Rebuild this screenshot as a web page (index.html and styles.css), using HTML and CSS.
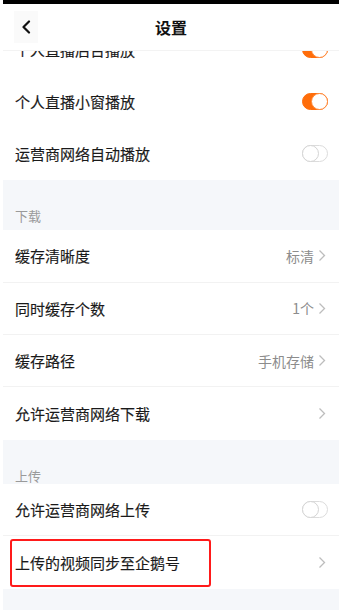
FILE: index.html
```html
<!DOCTYPE html>
<html lang="zh-CN">
<head>
<meta charset="utf-8">
<title>设置</title>
<link rel="stylesheet" href="styles.css">
</head>
<body>
<div class="phone">
  <div class="statusbar"></div>
  <div class="screen">
    <header class="navbar">
      <div class="back">
        <svg width="10" height="14" viewBox="0 0 10 14"><path d="M8 1.5 L2.5 7 L8 12.5" fill="none" stroke="#111" stroke-width="2.2" stroke-linecap="round" stroke-linejoin="round"/></svg>
      </div>
      <div class="title">设置</div>
      <div class="spacer"></div>
    </header>
    <div class="content">
      <div class="group plain">
        <div class="row"><span class="label">个人直播后台播放</span><span class="switch on"></span></div>
        <div class="row"><span class="label">个人直播小窗播放</span><span class="switch on"></span></div>
        <div class="row last"><span class="label">运营商网络自动播放</span><span class="switch"></span></div>
      </div>
      <div class="section section-a">下载</div>
      <div class="group">
        <div class="row"><span class="label">缓存清晰度</span><span class="right"><span class="value">标清</span><svg class="chev" width="8" height="13" viewBox="0 0 8 13"><path d="M1.5 1.5 L6.5 6.5 L1.5 11.5" fill="none" stroke="#bdbdbd" stroke-width="1.3"/></svg></span></div>
        <div class="row"><span class="label">同时缓存个数</span><span class="right"><span class="value">1个</span><svg class="chev" width="8" height="13" viewBox="0 0 8 13"><path d="M1.5 1.5 L6.5 6.5 L1.5 11.5" fill="none" stroke="#bdbdbd" stroke-width="1.3"/></svg></span></div>
        <div class="row"><span class="label">缓存路径</span><span class="right"><span class="value">手机存储</span><svg class="chev" width="8" height="13" viewBox="0 0 8 13"><path d="M1.5 1.5 L6.5 6.5 L1.5 11.5" fill="none" stroke="#bdbdbd" stroke-width="1.3"/></svg></span></div>
        <div class="row last"><span class="label">允许运营商网络下载</span><span class="right"><svg class="chev" width="8" height="13" viewBox="0 0 8 13"><path d="M1.5 1.5 L6.5 6.5 L1.5 11.5" fill="none" stroke="#bdbdbd" stroke-width="1.3"/></svg></span></div>
      </div>
      <div class="section section-b">上传</div>
      <div class="group">
        <div class="row"><span class="label">允许运营商网络上传</span><span class="switch"></span></div>
        <div class="row last"><span class="label">上传的视频同步至企鹅号</span><span class="right"><svg class="chev" width="8" height="13" viewBox="0 0 8 13"><path d="M1.5 1.5 L6.5 6.5 L1.5 11.5" fill="none" stroke="#bdbdbd" stroke-width="1.3"/></svg></span><span class="mark"></span></div>
      </div>
      <div class="section section-c"></div>
    </div>
  </div>
</div>
</body>
</html>
```
FILE: styles.css
```css
html, body {
  margin: 0;
  padding: 0;
  background: #ffffff;
  height: 100%;
  overflow: hidden;
}
body {
  font-family: "Noto Sans CJK SC", "Noto Sans", sans-serif;
  color: #1c1c1c;
}
.phone {
  width: 336px;
  margin-left: 3px;
  height: 610px;
  overflow: hidden;
  background: #ffffff;
}
.statusbar {
  height: 4px;
  background: #000000;
  margin-left: -3px;
}
.screen {
  position: relative;
  height: 606px;
  overflow: hidden;
}
.navbar {
  position: absolute;
  top: 0;
  left: 0;
  right: 0;
  height: 46px;
  background: #ffffff;
  border-bottom: 1px solid #f3f3f3;
  display: flex;
  align-items: center;
  z-index: 2;
}
.back {
  width: 24px;
  height: 32px;
  margin-left: 11px;
  background: #fafafa;
  display: flex;
  align-items: center;
  justify-content: center;
}
.back svg {
  display: block;
}
.title {
  flex: 1;
  text-align: center;
  font-size: 16px;
  font-weight: 700;
  color: #111111;
}
.spacer {
  width: 35px;
}
.content {
  padding-top: 19px;
}
.group {
  background: #ffffff;
}
.row {
  position: relative;
  height: 52.4px;
  box-sizing: border-box;
  border-bottom: 1px solid #f2f2f2;
  display: flex;
  align-items: center;
  justify-content: space-between;
  padding: 0 11px 0 12px;
}
.group.plain .row {
  border-bottom: none;
}
.row.last {
  border-bottom: none;
}
.label {
  font-size: 15px;
  color: #1a1a1a;
  -webkit-text-stroke: 0.15px #1a1a1a;
}
.right {
  display: flex;
  align-items: center;
  gap: 4px;
}
.value {
  font-size: 14px;
  color: #8c8c8c;
}
.chev {
  display: block;
  margin-right: 2px;
}
.switch {
  position: relative;
  width: 26px;
  height: 17px;
  box-sizing: border-box;
  border-radius: 9px;
  border: 1px solid #dcdcdc;
  background: #ffffff;
}
.switch::after {
  content: "";
  position: absolute;
  top: -1px;
  left: -1px;
  width: 17px;
  height: 17px;
  box-sizing: border-box;
  border-radius: 50%;
  background: #ffffff;
  border: 1px solid #d4d4d4;
}
.switch.on {
  background: #ff6d0a;
  border-color: #ff6d0a;
}
.switch.on::after {
  left: auto;
  right: -1px;
  border-color: #ff8a3a;
}
.section {
  background: #f5f7fa;
  font-size: 13px;
  color: #9a9a9a;
  padding-left: 12px;
  box-sizing: border-box;
  display: flex;
  align-items: flex-end;
}
.section-a {
  height: 50px;
  padding-bottom: 5px;
}
.section-b {
  height: 44px;
  padding-bottom: 0;
  line-height: 16px;
}
.section-c {
  height: 30px;
}
.mark {
  position: absolute;
  left: 7px;
  top: 3px;
  width: 201px;
  height: 48px;
  box-sizing: border-box;
  border: 2.5px solid #ff1a1a;
  border-radius: 3px;
  pointer-events: none;
}
```
